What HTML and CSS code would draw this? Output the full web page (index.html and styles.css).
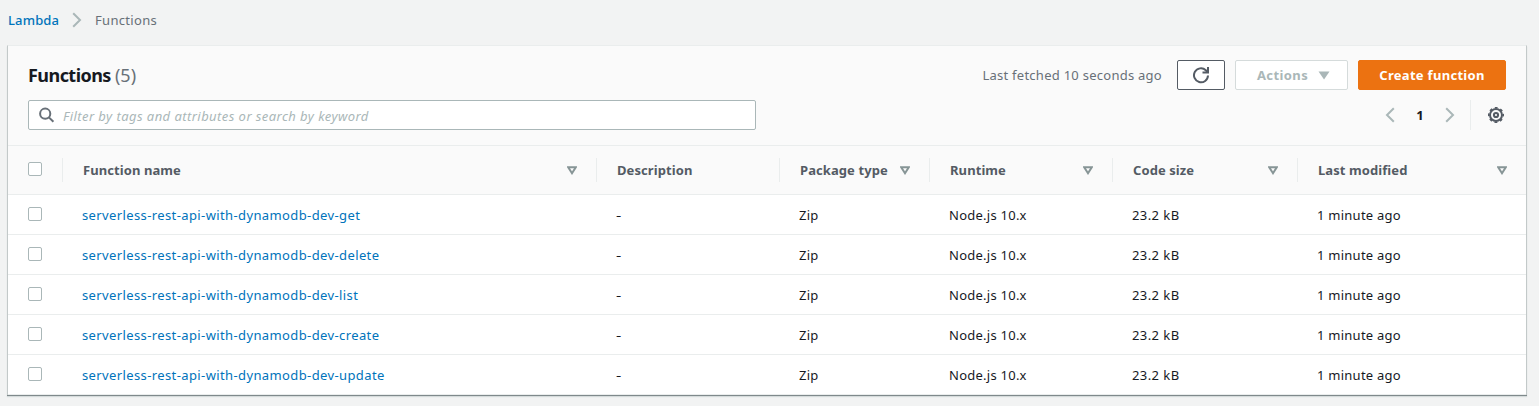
FILE: index.html
```html
<!DOCTYPE html>
<html lang="en">
<head>
<meta charset="utf-8">
<title>Functions - Lambda</title>
<link rel="stylesheet" href="styles.css">
</head>
<body>
<svg class="defs" width="0" height="0">
  <symbol id="sort" viewBox="0 0 10 9"><path d="M1.2 1.2h7.6L5 7.2z" fill="none" stroke="#879596" stroke-width="2"/></symbol>
  <symbol id="chevron" viewBox="0 0 10 16"><path d="M1.2 1.2L8 8l-6.800 6.800" fill="none" stroke="#aab7b8" stroke-width="2"/></symbol>
</svg>
<nav class="breadcrumb">
  <a class="crumb-link" href="#">Lambda</a>
  <svg class="crumb-sep" width="10" height="16"><use href="#chevron"/></svg>
  <span class="crumb-current">Functions</span>
</nav>
<main class="panel">
  <header class="panel-header">
    <div class="title-row">
      <h1 class="title">Functions <span class="count">(5)</span></h1>
      <span class="fetched">Last fetched 10 seconds ago</span>
      <button class="btn btn-refresh" aria-label="Refresh">
        <svg width="18" height="18" viewBox="0 0 18 18" fill="none" stroke="#545b64" stroke-width="2"><path d="M16 9.500a7 7 0 1 1-2.200-5.300L15.500 6"/><path d="M16 1v5.500h-5.500"/></svg>
      </button>
      <button class="btn btn-actions" disabled><span>Actions</span>
        <svg width="12" height="9" viewBox="0 0 12 9"><path d="M.5.500h11L6 8.600z" fill="#aab7b8"/></svg>
      </button>
      <button class="btn btn-create"><span>Create function</span></button>
    </div>
    <div class="filter-row">
      <label class="search">
        <svg width="16" height="16" viewBox="0 0 16 16" fill="none" stroke="#687078" stroke-width="2"><circle cx="6.200" cy="6.700" r="5.100"/><path d="M9.900 10.400l4.500 4.400"/></svg>
        <span class="placeholder">Filter by tags and attributes or search by keyword</span>
      </label>
      <div class="pager">
        <svg class="prev" width="10" height="16"><use href="#chevron"/></svg>
        <span class="page">1</span>
        <svg width="10" height="16"><use href="#chevron"/></svg>
      </div>
      <div class="settings">
        <svg width="16" height="16" viewBox="0 0 16 16" fill="none" stroke="#545b64"><circle cx="8" cy="8" r="6" stroke-width="2"/><circle cx="8" cy="8" r="7.300" stroke-width="1.500" stroke-dasharray="2.867 2.867" stroke-dashoffset="1.433"/><circle cx="8" cy="8" r="2.100" stroke-width="2"/></svg>
      </div>
    </div>
  </header>
  <div class="row head">
    <div class="check"><i class="box"></i></div>
    <div class="th"><span>Function name</span><svg width="10" height="9"><use href="#sort"/></svg></div>
    <div class="th"><span>Description</span></div>
    <div class="th"><span>Package type</span><svg width="10" height="9"><use href="#sort"/></svg></div>
    <div class="th"><span>Runtime</span><svg width="10" height="9"><use href="#sort"/></svg></div>
    <div class="th"><span>Code size</span><svg width="10" height="9"><use href="#sort"/></svg></div>
    <div class="th"><span>Last modified</span><svg width="10" height="9"><use href="#sort"/></svg></div>
  </div>
  <div class="row"><div class="check"><i class="box"></i></div><div class="td name"><a href="#">serverless-rest-api-with-dynamodb-dev-get</a></div><div class="td dash">-</div><div class="td">Zip</div><div class="td">Node.js 10.x</div><div class="td size">23.2 kB</div><div class="td">1 minute ago</div></div>
  <div class="row"><div class="check"><i class="box"></i></div><div class="td name"><a href="#">serverless-rest-api-with-dynamodb-dev-delete</a></div><div class="td dash">-</div><div class="td">Zip</div><div class="td">Node.js 10.x</div><div class="td size">23.2 kB</div><div class="td">1 minute ago</div></div>
  <div class="row"><div class="check"><i class="box"></i></div><div class="td name"><a href="#">serverless-rest-api-with-dynamodb-dev-list</a></div><div class="td dash">-</div><div class="td">Zip</div><div class="td">Node.js 10.x</div><div class="td size">23.2 kB</div><div class="td">1 minute ago</div></div>
  <div class="row"><div class="check"><i class="box"></i></div><div class="td name"><a href="#">serverless-rest-api-with-dynamodb-dev-create</a></div><div class="td dash">-</div><div class="td">Zip</div><div class="td">Node.js 10.x</div><div class="td size">23.2 kB</div><div class="td">1 minute ago</div></div>
  <div class="row"><div class="check"><i class="box"></i></div><div class="td name"><a href="#">serverless-rest-api-with-dynamodb-dev-update</a></div><div class="td dash">-</div><div class="td">Zip</div><div class="td">Node.js 10.x</div><div class="td size">23.2 kB</div><div class="td">1 minute ago</div></div>
</main>
</body>
</html>
```
FILE: styles.css
```css
* { box-sizing: border-box; }
body {
  margin: 0;
  height: 406px;
  overflow: hidden;
  background: #f2f3f3;
  color: #16191f;
  font: 13px/20px "Noto Sans", "Open Sans", sans-serif;
}
a { color: #0073bb; text-decoration: none; }
svg { display: block; flex: none; }
.defs { position: absolute; }

.breadcrumb { display: flex; align-items: center; height: 45px; padding: 0 8px 5px; }
.crumb-sep { margin: 0 13px; }
.crumb-link { width: 51px; font-weight: 500; letter-spacing: 0.15px; white-space: nowrap; }
.crumb-current { color: #687078; letter-spacing: 0.32px; }

.panel {
  margin: 0 12px 0 7px;
  width: 1520px;
  height: 350px;
  border: 1px solid #c3c9c9;
  border-top-color: #eaeded;
  border-bottom: 0;
  background: #fff;
  box-shadow: 0 1px 0 #7f898b, 0 2px 1px #d5dbdb;
}
.panel-header { height: 100px; padding: 14px 20px 0; background: #fafafa; border-bottom: 1px solid #eaeded; }
.title-row { display: flex; align-items: center; height: 30px; }
.title { flex: 1; margin: 0; font-size: 18px; line-height: 30px; font-weight: 700; letter-spacing: -0.55px; }
.count { color: #687078; font-weight: 400; letter-spacing: 0; }
.fetched { margin-right: 15px; color: #687078; letter-spacing: 0.26px; }
.btn {
  display: flex;
  align-items: center;
  justify-content: center;
  height: 30px;
  padding: 0;
  border: 1px solid #545b64;
  border-radius: 2px;
  background: #fff;
  font: 700 13px/20px "Noto Sans", sans-serif;
}
.btn-refresh { width: 48px; }
.btn-actions { width: 113px; margin: 0 10px; padding-left: 4px; gap: 10px; color: #aab7b8; border-color: #d5dbdb; letter-spacing: 0.4px; }
.btn-create { width: 148px; color: #fff; background: #ec7211; border-color: #ec7211; letter-spacing: 0.3px; }

.filter-row { display: flex; align-items: center; margin-top: 10px; height: 30px; }
.search {
  display: flex;
  align-items: center;
  gap: 8px;
  width: 728px;
  height: 30px;
  padding-left: 10px;
  border: 1px solid #aab7b8;
  border-radius: 2px;
  background: #fff;
}
.placeholder { color: #aab7b8; font-style: italic; padding-top: 1px; letter-spacing: 0.44px; }
.pager { display: flex; align-items: center; margin-left: auto; }
.prev { transform: scaleX(-1); }
.page { width: 50px; text-align: center; font-weight: 700; }
.settings { display: flex; align-items: center; justify-content: flex-end; width: 36px; height: 30px; margin-left: 15px; padding-right: 2px; border-left: 1px solid #eaeded; }

.row {
  display: grid;
  grid-template-columns: 54px 534px 183px 150px 183px 185px 1fr;
  align-items: center;
  height: 40px;
  border-bottom: 1px solid #eaeded;
}
.head { height: 49px; background: #fafafa; }
.check { padding-left: 20px; }
.box { display: block; width: 14px; height: 14px; margin-bottom: 1px; border: 1px solid #aab7b8; border-radius: 2px; background: #fff; }
.head .box { margin-bottom: 3px; }
.th {
  display: flex;
  align-items: center;
  justify-content: space-between;
  height: 24px;
  padding: 0 19px 0 20px;
  border-left: 1px solid #eaeded;
  color: #545b64;
  font-weight: 700;
  letter-spacing: 0.08px;
  white-space: nowrap;
}
.td { padding: 1px 0 0 20px; letter-spacing: 0.25px; white-space: nowrap; }
.name { letter-spacing: 0.385px; }
.size { letter-spacing: 0.42px; }
.dash { transform: scaleX(1.25); transform-origin: 20px 50%; }
```
